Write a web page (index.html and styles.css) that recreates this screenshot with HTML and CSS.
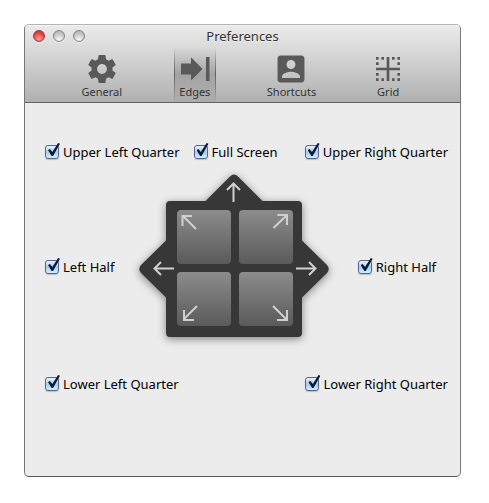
FILE: index.html
```html
<!DOCTYPE html>
<html lang="en">
<head>
    <meta charset="UTF-8">
    <title>Preferences</title>
    <meta name="viewport" content="width=device-width, initial-scale=1">
    <link rel="stylesheet" href="styles.css">
</head>
<body>
<div class="window">
    <header class="header">
        <div class="titlebar">
            <div class="lights">
                <button type="button" class="light close" aria-label="Close"></button>
                <button type="button" class="light" aria-label="Minimize"></button>
                <button type="button" class="light" aria-label="Zoom"></button>
            </div>
            <h1>Preferences</h1>
        </div>
        <nav class="toolbar">
            <button type="button" class="tab">
                <svg viewBox="0.6 0.6 22.8 22.8"><path d="M19.43 12.98c.04-.32.07-.64.07-.98s-.03-.66-.07-.98l2.11-1.65c.19-.15.24-.42.12-.64l-2-3.46c-.12-.22-.39-.3-.61-.22l-2.49 1c-.52-.4-1.08-.73-1.69-.98l-.38-2.65C14.46 2.18 14.25 2 14 2h-4c-.25 0-.46.18-.49.42l-.38 2.65c-.61.25-1.17.59-1.69.98l-2.49-1c-.23-.09-.49 0-.61.22l-2 3.46c-.13.22-.07.49.12.64l2.11 1.65c-.04.32-.07.65-.07.98s.03.66.07.98l-2.11 1.65c-.19.15-.24.42-.12.64l2 3.46c.12.22.39.3.61.22l2.49-1c.52.4 1.08.73 1.69.98l.38 2.65c.03.24.24.42.49.42h4c.25 0 .46-.18.49-.42l.38-2.65c.61-.25 1.17-.59 1.69-.98l2.49 1c.23.09.49 0 .61-.22l2-3.46c.12-.22.07-.49-.12-.64l-2.11-1.65zM12 15.5c-1.93 0-3.5-1.57-3.5-3.5s1.57-3.5 3.5-3.5 3.5 1.57 3.5 3.5-1.57 3.5-3.5 3.5z"/></svg>
                <span>General</span>
            </button>
            <button type="button" class="tab active">
                <svg viewBox="0 0 32 32"><path d="M2 10.500h10V4.200L23.500 16 12 27.500V21.500H2zM27 4h3.500v24H27z"/></svg>
                <span>Edges</span>
            </button>
            <button type="button" class="tab">
                <svg viewBox="1.3 1.3 21.4 21.4"><path d="M3 5v14c0 1.100.89 2 2 2h14c1.100 0 2-.9 2-2V5c0-1.100-.9-2-2-2H5c-1.110 0-2 .9-2 2zm12 4c0 1.660-1.340 3-3 3s-3-1.340-3-3 1.340-3 3-3 3 1.340 3 3zm-9 8c0-2 4-3.100 6-3.100s6 1.100 6 3.100v1H6v-1z"/></svg>
                <span>Shortcuts</span>
            </button>
            <button type="button" class="tab">
                <svg viewBox="0 0 24 24"><path d="M3 21h2v-2H3v2zm4 0h2v-2H7v2zM5 7H3v2h2V7zM3 17h2v-2H3v2zM9 3H7v2h2V3zM5 3H3v2h2V3zm12 0h-2v2h2V3zm2 6h2V7h-2v2zm0-6v2h2V3h-2zm-4 18h2v-2h-2v2zM13 3h-2v8H3v2h8v8h2v-8h8v-2h-8V3zm6 18h2v-2h-2v2zm0-4h2v-2h-2v2z"/></svg>
                <span>Grid</span>
            </button>
        </nav>
    </header>

    <main class="content">
        <div class="row top">
            <label class="check"><input type="checkbox" checked>Upper Left Quarter</label>
            <label class="check"><input type="checkbox" checked>Full Screen</label>
            <label class="check"><input type="checkbox" checked>Upper Right Quarter</label>
        </div>
        <div class="row middle">
            <label class="check"><input type="checkbox" checked>Left Half</label>
            <svg class="pad" viewBox="0 0 190 164">
                <defs>
                    <linearGradient id="cell" x1="0" y1="0" x2="0" y2="1">
                        <stop offset="0" stop-color="#8c8c8c"/>
                        <stop offset="1" stop-color="#5a5a5a"/>
                    </linearGradient>
                </defs>
                <path class="base" d="M91 2.500q4-4 8 0l24.500 24.500H159q4 0 4 4v35.500l25 24.500q3.500 4 0 8l-25 24.500V159q0 4-4 4H31q-4 0-4-4v-35.500L2 99q-3.500-4 0-8l25-24.500V31q0-4 4-4h35.500z"/>
                <g fill="url(#cell)">
                    <rect x="38" y="36" width="54" height="54" rx="4"/>
                    <rect x="100" y="36" width="54" height="54" rx="4"/>
                    <rect x="38" y="98" width="54" height="54" rx="4"/>
                    <rect x="100" y="98" width="54" height="54" rx="4"/>
                </g>
                <g class="arrows">
                    <path d="M94.500 28V9M88 16l6.500-6.500L101 16"/>
                    <path d="M35 94.500H16M22 88l-6.500 6.500L22 101"/>
                    <path d="M157 94.500h19M170 88l6.500 6.500L170 101"/>
                    <path d="M57 55L43.500 41.500M53 42h-9.500v10"/>
                    <path d="M134.500 54l13.500-13M138.500 41h9.500v10"/>
                    <path d="M58 132l-13 13M45 136v10h10"/>
                    <path d="M134 132l13 13M148 136v10h-10"/>
                </g>
            </svg>
            <label class="check"><input type="checkbox" checked>Right Half</label>
        </div>
        <div class="row bottom">
            <label class="check"><input type="checkbox" checked>Lower Left Quarter</label>
            <label class="check"><input type="checkbox" checked>Lower Right Quarter</label>
        </div>
    </main>
</div>
</body>
</html>
```
FILE: styles.css
```css
*{ margin:0; padding:0; box-sizing:border-box; }
body{ display:flex; min-height:100vh; padding:24px 28px 26px 24px; background:#fff; color:#000; font:13px/18px "Noto Sans", "Open Sans", sans-serif; }
button{ border:0; background:none; font:inherit; color:inherit; }

.window{ flex:1; min-width:0; border:1px solid #777; border-top-color:#b4b4b4; border-bottom-color:#555; border-radius:5px; background:#ececec; overflow:hidden; }

/* title bar and toolbar share one gradient */
.header{ border-bottom:1px solid #626262; background:linear-gradient(#ebebeb, #d2d2d2 45%, #b0b0b0); box-shadow:inset 0 1px 0 #f4f4f4; color:#333; text-shadow:0 1px 0 rgba(255,255,255,.5); }
.titlebar{ display:grid; grid-template-columns:1fr auto 1fr; align-items:center; height:22px; padding:0 8px; }
.titlebar h1{ font-size:13px; font-weight:normal; }
.lights{ display:flex; gap:8px; }
.light{ width:12px; height:12px; border:1px solid #858585; border-radius:50%; background:radial-gradient(circle at 50% 85%, #f8f8f8, #c9c9c9 55%, #aaa); box-shadow:0 1px 0 rgba(255,255,255,.6); }
.light.close{ border-color:#93393a; background:radial-gradient(circle at 50% 80%, #ffa39c, #ea4a46 55%, #b92d2b); }

.toolbar{ display:flex; justify-content:center; gap:51px; padding-left:5px; }
.tab{ display:flex; flex-direction:column; align-items:center; min-width:42px; padding:6px 0 3px; font-size:11px; line-height:14px; }
.tab svg{ width:32px; height:32px; fill:#595959; }
.tab.active{
    background:
        linear-gradient(rgba(80,80,80,0), rgba(80,80,80,.8) 50%, rgba(80,80,80,0)) left / 1px 100% no-repeat,
        linear-gradient(rgba(80,80,80,0), rgba(80,80,80,.8) 50%, rgba(80,80,80,0)) right / 1px 100% no-repeat,
        linear-gradient(rgba(90,90,90,0), rgba(90,90,90,.32) 50%, rgba(90,90,90,.05));
}

.content{ padding:40px 12px 20px 20px; }
.row{ display:flex; align-items:center; }
.check{ display:flex; align-items:center; gap:4px; white-space:nowrap; }
.check input{ appearance:none; position:relative; width:14px; height:14px; border:1px solid #5a6390; border-radius:3px; background:linear-gradient(#e9f3fc, #a4cdf2 50%, #c9f0ff); box-shadow:0 1px 1px rgba(0,0,0,.2); }
/* the tick pokes out of the box */
.check input:checked::after{ content:""; position:absolute; left:2px; top:-3px; width:12px; height:13px; background:#0d1b33; clip-path:polygon(0 54%, 16% 46%, 36% 70%, 84% 0, 100% 5%, 42% 100%, 30% 100%); }

.top{ gap:14px; }
.top .check:last-child{ margin-left:auto; }
.middle{ margin-top:13px; padding-right:12px; }
.middle .check{ margin-top:22px; }
.middle .check:last-child{ margin-left:auto; }
.pad{ width:190px; height:164px; margin-left:25px; overflow:visible; }
.pad .base{ fill:#373737; filter:drop-shadow(0 2px 4px rgba(0,0,0,.45)); }
.pad .arrows{ fill:none; stroke:#d0d0d0; stroke-width:2; }
.bottom{ justify-content:space-between; margin-top:37px; }
```
